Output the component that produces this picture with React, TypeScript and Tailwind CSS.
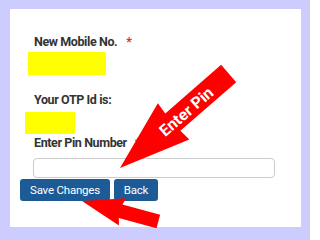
import React from 'react'

const Arrows: React.FC = () => (
  <svg className="absolute left-0 top-0" width={310} height={240} viewBox="0 0 310 240">
    <g transform="translate(120 168) rotate(-41)">
      <path d="M0 0 L71 -24 L70 -11.5 L144 -11.5 L144 11.5 L70 11.5 L71 24 Z" fill="#ff0000" />
      <text
        x={87}
        y={1}
        fill="#ffffff"
        fontSize={16}
        fontWeight={700}
        textAnchor="middle"
        dominantBaseline="central"
        fontFamily="Roboto, 'Liberation Sans', sans-serif"
      >
        Enter Pin
      </text>
    </g>
    <g transform="translate(82 201) rotate(15)">
      <path d="M0 0 L42 -14 L40 -7 L79 -7 L79 7 L40 7 L42 14 Z" fill="#ff0000" />
    </g>
  </svg>
)

const App: React.FC = () => {
  return (
    <div className="relative w-[310px] h-[240px] overflow-hidden bg-[#ccccff] pt-[9px] pl-[10px] font-['Roboto','Liberation_Sans',sans-serif]">
      <div className="w-[291px] h-[218px] bg-white text-[#333333]">
        <div className="pt-[25px] pl-[24px] text-[12.5px] tracking-[-0.4px] leading-[16px] font-bold">
          New Mobile No.
          <span className="ml-[9px] text-[#d9302c]">*</span>
        </div>
        <div className="mt-[2px] ml-[18px] w-[78px] h-[23px] bg-[#ffff00]" />
        <div className="mt-[17px] pl-[24px] text-[12.5px] tracking-[-0.4px] leading-[16px] font-bold">Your OTP Id is:</div>
        <div className="mt-[4px] ml-[15px] w-[50px] h-[22px] bg-[#ffff00]" />
        <div className="mt-[1px] pl-[24px] text-[12.5px] tracking-[-0.4px] leading-[16px] font-bold">
          Enter Pin Number
          <span className="ml-[8px] text-[#d9302c]">*</span>
        </div>
        <input
          type="text"
          className="block mt-[7px] ml-[23px] w-[242px] h-[20px] rounded-[4px] border border-[#cccccc] bg-white outline-none"
        />
        <div className="mt-[1px] ml-[10px] flex gap-[4px]">
          <button className="w-[90px] h-[22px] rounded-[3px] bg-[#1d5b96] text-white text-[11.5px] tracking-[-0.2px] leading-[22px]">
            Save Changes
          </button>
          <button className="w-[44px] h-[22px] rounded-[3px] bg-[#1d5b96] text-white text-[11.5px] tracking-[-0.2px] leading-[22px]">
            Back
          </button>
        </div>
      </div>
      <Arrows />
    </div>
  )
}

export default App
